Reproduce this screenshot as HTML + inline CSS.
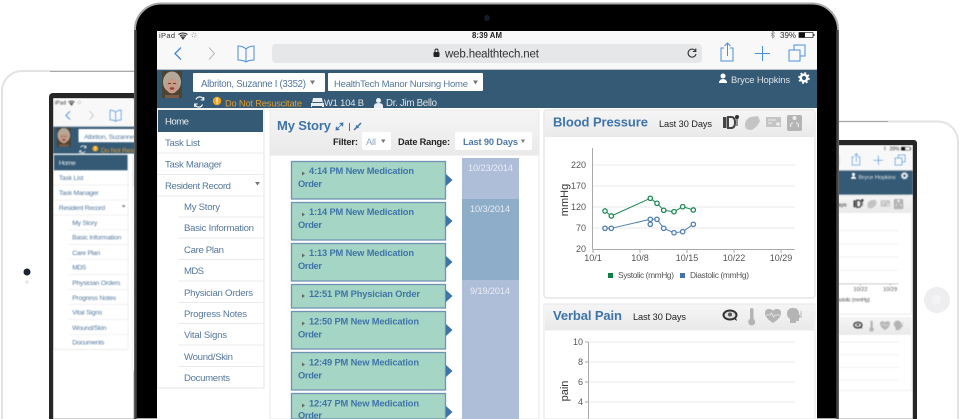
<!DOCTYPE html>
<html><head><meta charset="utf-8"><style>
html,body{margin:0;padding:0;background:#fff;width:960px;height:419px;overflow:hidden}
svg{display:block}
text{font-family:"Liberation Sans",sans-serif}
.m{font-size:9.6px;fill:#55789c}
.h{font-size:13px;font-weight:bold;fill:#3f74a8}
.c{font-size:9.3px;font-weight:bold;fill:#3f74a8}
.l{font-size:8.4px;fill:#555}
.card{fill:#a5d5c5;stroke:#6f93b3;stroke-width:1.3}
.arr{fill:#3f74a8}
.tri{fill:#666}
.g{stroke:#e8e8e8;stroke-width:1}
.ic{fill:none;stroke:#4a90d9;stroke-width:1}
</style></head><body>
<svg xmlns="http://www.w3.org/2000/svg" width="960" height="419" viewBox="0 0 960 419">
<defs>
<clipPath id="cm"><rect x="157" y="31" width="660" height="388"/></clipPath>
<linearGradient id="hd" x1="0" y1="0" x2="0" y2="1"><stop offset="0" stop-color="#f5f5f5"/><stop offset="1" stop-color="#e9e9e9"/></linearGradient>
<clipPath id="cl"><rect x="53" y="98" width="81" height="321"/></clipPath>
<clipPath id="cr"><rect x="838" y="145" width="75" height="274"/></clipPath>
<g id="screen">
<rect x="157" y="31" width="660" height="388" fill="#fff"/>
<rect x="157" y="31" width="660" height="38" fill="#f8f8f8"/>
<text x="159" y="38" font-size="7.500" fill="#333" textLength="16">iPad</text>
<path d="M178.500 34.500q4.500-3 9 0M180 36q3-2 6 0M183 39l-1.500-2h3z" fill="none" stroke="#333" stroke-width="1.100"/>
<circle cx="194" cy="35" r="2" fill="none" stroke="#999" stroke-dasharray="1 1"/>
<text x="472" y="38" font-size="7.800" font-weight="bold" fill="#222" textLength="30">8:39 AM</text>
<path d="M771 33l3.500 3-2 2v-7l2 2-3.500 3" fill="none" stroke="#888" stroke-width=".7"/>
<text x="780" y="38" font-size="8" fill="#333" textLength="16">39%</text>
<rect x="799" y="32.500" width="14" height="5" fill="#fff" stroke="#222" stroke-width=".7"/><rect x="799" y="32.500" width="6" height="5" fill="#111"/><rect x="813.500" y="34" width="1" height="2" fill="#222"/>
<path d="M181 47.500l-6 6 6 6" fill="none" stroke="#3d86d6" stroke-width="1.300"/>
<path d="M209 47.500l5.500 6-5.500 6" fill="none" stroke="#bbb" stroke-width="1.100"/>
<path d="M246 49q-3-3-8-3v14q5 0 8 2q3-2 8-2v-14q-5 0-8 3v13" class="ic"/>
<rect x="272" y="44" width="430" height="19" rx="4" fill="#e6e7e8"/>
<rect x="433.500" y="52" width="6" height="5" rx="1" fill="#222"/><path d="M435 52v-1.500a1.500 1.500 0 0 1 3 0v1.500" fill="none" stroke="#222"/>
<text x="445" y="57.500" font-size="11.500" fill="#333" textLength="94">web.healthtech.net</text>
<path d="M695.500 51a4 4 0 1 0 .5 3M695.800 48.500v3h-3" fill="none" stroke="#333" stroke-width="1.100"/>
<path d="M724 48h-3v13h12v-13h-3M727.500 56v-12.500M724.500 46l3-3 3 3" class="ic"/>
<path d="M755 53.500h15M762.500 46v15" class="ic"/>
<path d="M789 50h11v11h-11zM794 50v-5h11v11h-5" class="ic"/>
<rect x="157" y="69" width="660" height="1" fill="#bcc4cb"/>
<rect x="157" y="70" width="660" height="38" fill="#355a75"/>
<rect x="162" y="71" width="20" height="27" fill="#4e4232"/>
<ellipse cx="172" cy="82" rx="9" ry="10.500" fill="#b3a99b"/>
<ellipse cx="172" cy="86" rx="6" ry="7.500" fill="#c89a86"/>
<path d="M168 83.500h3M173 83.500h3" stroke="#5c4238" stroke-width=".9"/>
<ellipse cx="172" cy="88.500" rx="2.300" ry="1.400" fill="#8a4a42"/>
<rect x="165" y="95" width="14" height="3" fill="#7a5c46"/>
<rect x="193" y="73" width="132" height="19" rx="1" fill="#fff"/>
<text x="201" y="87" font-size="9.700" fill="#55789c" textLength="105">Albriton, Suzanne I (3352)</text>
<path d="M310 80.500h5l-2.500 4z" fill="#777"/>
<rect x="328" y="73" width="155" height="18" rx="1" fill="#fff"/>
<text x="334" y="87" font-size="9.500" fill="#55789c" textLength="134">HealthTech Manor Nursing Home</text>
<path d="M473 80.500h5l-2.500 4z" fill="#777"/>
<path d="M203.500 99.500a4 4 0 0 0-7.500 0M195 104.500a4 4 0 0 0 7.500 0M203.700 97v3h-3M194.700 107v-3h3" fill="none" stroke="#fff" stroke-width="1.100"/>
<circle cx="217" cy="101" r="4.200" fill="#f0a41f"/><rect x="216.400" y="98" width="1.300" height="3.700" fill="#fff"/><rect x="216.400" y="102.500" width="1.300" height="1.200" fill="#fff"/>
<text x="225" y="106.500" font-size="9.300" fill="#e69c2e" textLength="77">Do Not Resuscitate</text>
<path d="M313 98h9l1 5h1v4h-2v-1h-10v1h-1v-4h1z" fill="#e9eef2"/><rect x="312.500" y="102" width="10" height="1" fill="#355a75"/>
<text x="324" y="106" font-size="9.400" fill="#dde3e8" textLength="40">W1 104 B</text>
<circle cx="378.500" cy="100.500" r="2.500" fill="#e9eef2"/><path d="M374 108v-2q0-3 4.500-3t4.500 3v2z" fill="#e9eef2"/>
<text x="386" y="106" font-size="9.700" fill="#dde3e8" textLength="51">Dr. Jim Bello</text>
<circle cx="723" cy="76" r="2.500" fill="#fff"/><path d="M719 83v-1q1-3 4-3t4 3v1z" fill="#fff"/>
<text x="731" y="83" font-size="9.400" fill="#dde3e8" textLength="59">Bryce Hopkins</text>
<circle cx="804" cy="78" r="3.300" fill="none" stroke="#fff" stroke-width="2.400"/><circle cx="804" cy="78" r="5" fill="none" stroke="#fff" stroke-width="1.600" stroke-dasharray="2 1.930"/>

<rect x="157" y="109" width="107" height="279" fill="#fff" stroke="#e6e6e6"/>
<rect x="158" y="110" width="105" height="22" fill="#355a75"/>
<text x="165" y="124.500" font-size="9.600" fill="#e6ebef" textLength="24">Home</text>
<g class="m">
<text x="165" y="146" textLength="35">Task List</text>
<text x="165" y="167.500" textLength="57">Task Manager</text>
<text x="165" y="189" textLength="66">Resident Record</text>
<text x="184" y="210" textLength="36">My Story</text>
<text x="184" y="231" textLength="70">Basic Information</text>
<text x="184" y="253" textLength="40">Care Plan</text>
<text x="184" y="274" textLength="20">MDS</text>
<text x="184" y="296" textLength="69">Physician Orders</text>
<text x="184" y="317" textLength="63">Progress Notes</text>
<text x="184" y="338" textLength="43">Vital Signs</text>
<text x="184" y="360" textLength="49">Wound/Skin</text>
<text x="184" y="381" textLength="46">Documents</text>
</g>
<path d="M255 182h5l-2.500 3.500z" fill="#777"/>
<path d="M157 153h107M157 174.500h107M157 196h107M178 217h86M178 238h86M178 259.500h86M178 281h86M178 302.500h86M178 323.500h86M178 345h86M178 366.500h86" stroke="#ebebeb" fill="none"/>

<rect x="270" y="110" width="269" height="309" fill="#fff" stroke="#e9e9e9"/>
<rect x="270.500" y="110.500" width="268" height="45" fill="url(#hd)"/>
<text x="277" y="130" class="h" textLength="54">My Story</text>
<path d="M337 129l4-4M343 123l-3 .3 2.700 2.700zM336 130l3-.3-2.700-2.700z" fill="#3f74a8" stroke="#3f74a8" stroke-width=".8"/>
<rect x="349" y="123" width="1" height="8" fill="#3f74a8"/>
<path d="M354 130l7-7M356 125.500l2.500 2.500" fill="none" stroke="#3f74a8" stroke-width="1.500"/>
<text x="333" y="145" font-size="9.400" font-weight="bold" fill="#222" textLength="25">Filter:</text>
<rect x="362" y="132" width="29" height="18" rx="2" fill="#fff"/>
<text x="366" y="145" font-size="9.500" fill="#8aa6c4" textLength="10">All</text>
<path d="M381 139.500h4.500l-2.200 3.500z" fill="#777"/>
<text x="398" y="145" font-size="9.200" font-weight="bold" fill="#222" textLength="52">Date Range:</text>
<rect x="455" y="132" width="77" height="18" rx="2" fill="#fff"/>
<text x="463" y="145" font-size="9.300" font-weight="bold" fill="#4f7aa8" textLength="55">Last 90 Days</text>
<path d="M521 139.500h4l-2 3.500z" fill="#777"/>

<rect x="462" y="158" width="57" height="41" fill="#aebdd8"/>
<rect x="462" y="199" width="57" height="81" fill="#8eadc8"/>
<rect x="462" y="280" width="57" height="139" fill="#aebdd8"/>
<text x="468" y="171" font-size="9.200" fill="#e8edf4" textLength="45">10/23/2014</text>
<text x="470" y="212" font-size="9.200" fill="#e8edf4" textLength="40">10/3/2014</text>
<text x="470" y="294" font-size="9.200" fill="#e8edf4" textLength="40">9/19/2014</text>

<rect x="291.500" y="161.500" width="154" height="37.500" class="card"/><path class="arr" d="M446 174l6.500 6-6.500 6z"/><path class="tri" d="M302 171.500l3 2-3 2z"/>
<text x="309" y="174" class="c" textLength="105">4:14 PM New Medication</text><text x="298" y="187" class="c" textLength="24">Order</text>
<rect x="291.500" y="202.500" width="154" height="37.500" class="card"/><path class="arr" d="M446 215l6.500 6-6.500 6z"/><path class="tri" d="M302 212.500l3 2-3 2z"/>
<text x="309" y="215" class="c" textLength="105">1:14 PM New Medication</text><text x="298" y="228" class="c" textLength="24">Order</text>
<rect x="291.500" y="243.500" width="154" height="37.500" class="card"/><path class="arr" d="M446 256l6.500 6-6.500 6z"/><path class="tri" d="M302 253.500l3 2-3 2z"/>
<text x="309" y="256" class="c" textLength="105">1:13 PM New Medication</text><text x="298" y="269" class="c" textLength="24">Order</text>
<rect x="291.500" y="284.500" width="154" height="23.500" class="card"/><path class="arr" d="M446 290l6.500 6-6.500 6z"/><path class="tri" d="M302 294l3 2-3 2z"/>
<text x="309" y="297" class="c" textLength="111">12:51 PM Physician Order</text>
<rect x="291.500" y="311.500" width="154" height="37.500" class="card"/><path class="arr" d="M446 324l6.500 6-6.500 6z"/><path class="tri" d="M302 321.500l3 2-3 2z"/>
<text x="309" y="324.500" class="c" textLength="110">12:50 PM New Medication</text><text x="298" y="337.500" class="c" textLength="24">Order</text>
<rect x="291.500" y="352.500" width="154" height="37.500" class="card"/><path class="arr" d="M446 365l6.500 6-6.500 6z"/><path class="tri" d="M302 362.500l3 2-3 2z"/>
<text x="309" y="365.500" class="c" textLength="110">12:49 PM New Medication</text><text x="298" y="378.500" class="c" textLength="24">Order</text>
<rect x="291.500" y="393.500" width="154" height="25.500" class="card"/><path class="arr" d="M446 406l6.500 6-6.500 6z"/><path class="tri" d="M302 403.500l3 2-3 2z"/>
<text x="309" y="406.500" class="c" textLength="110">12:47 PM New Medication</text><text x="298" y="418.500" class="c" textLength="24">Order</text>

<rect x="544" y="110" width="271" height="188" rx="3" fill="#fff" stroke="#e6e6e6" stroke-width="1.500"/>
<rect x="545" y="111" width="269" height="26" fill="url(#hd)"/>
<text x="553" y="126.500" class="h" textLength="95">Blood Pressure</text>
<text x="659" y="127" font-size="9.200" fill="#222" textLength="53">Last 30 Days</text>
<rect x="723" y="117" width="3.500" height="11" fill="#444"/><path d="M728 117h3q4 0 4 5.500t-4 5.500h-3z" fill="none" stroke="#444" stroke-width="2"/><circle cx="737" cy="117" r="2" fill="#333"/><path d="M737 118v8" stroke="#333"/>
<path d="M745 125q0-6 6-8l7-1 2 5q-3 7-9 9-6 0-6-5z" fill="#c4c4c4"/>
<rect x="766" y="117" width="15" height="10" fill="#c4c4c4"/><path d="M768 120h8M768 123h4" stroke="#eee"/><circle cx="778" cy="124" r="1.800" fill="#eee"/>
<rect x="787" y="115" width="15" height="16" rx="2" fill="#b4b4b4"/><circle cx="794.500" cy="118" r="2" fill="#eee"/><path d="M791 127a2.500 2.500 0 0 1 2-4M798 127a2.500 2.500 0 0 0-2-4" fill="none" stroke="#eee"/>

<path d="M593 165h202M593 186h202M593 207h202M593 228h202" class="g"/>
<path d="M592.500 148v101.500M592.500 249.500h202" stroke="#aaa" fill="none"/>
<path d="M593 250v3M640 250v3M687 250v3M734 250v3M781 250v3" stroke="#aaa"/>
<g class="l" text-anchor="end" style="font-size:9px">
<text x="586" y="168">220</text><text x="586" y="189">170</text><text x="586" y="210">120</text><text x="586" y="231">70</text><text x="586" y="252">20</text>
</g>
<g class="l" text-anchor="middle" style="font-size:9px">
<text x="593" y="261">10/1</text><text x="640" y="261">10/8</text><text x="687" y="261">10/15</text><text x="734" y="261">10/22</text><text x="781" y="261">10/29</text>
</g>
<text x="568" y="200" font-size="11" fill="#333" text-anchor="middle" transform="rotate(-90 568 200)">mmHg</text>
<path d="M605 211L611.300 216 650.300 198.300 657 203.300 663.700 210.300 674 211.700 682.700 206.700 693.300 210" fill="none" stroke="#1e8a55"/>
<path d="M605 228.300L611.300 228.300 650.300 219.300 657 219.300 663.700 228.300 674 232.700 682.700 231.700 693.300 224.300M650.300 219.300V224.300" fill="none" stroke="#4f7fb0"/>
<g fill="#fff" stroke="#1e8a55" stroke-width="1.300"><circle cx="605" cy="211" r="2.200"/><circle cx="611.300" cy="216" r="2.200"/><circle cx="650.300" cy="198.300" r="2.200"/><circle cx="657" cy="203.300" r="2.200"/><circle cx="663.700" cy="210.300" r="2.200"/><circle cx="674" cy="211.700" r="2.200"/><circle cx="682.700" cy="206.700" r="2.200"/><circle cx="693.300" cy="210" r="2.200"/></g>
<g fill="#fff" stroke="#4f7fb0" stroke-width="1.300"><circle cx="605" cy="228.300" r="2.200"/><circle cx="611.300" cy="228.300" r="2.200"/><circle cx="650.300" cy="219.300" r="2.200"/><circle cx="650.300" cy="224.300" r="2.200"/><circle cx="657" cy="219.300" r="2.200"/><circle cx="663.700" cy="228.300" r="2.200"/><circle cx="674" cy="232.700" r="2.200"/><circle cx="682.700" cy="231.700" r="2.200"/><circle cx="693.300" cy="224.300" r="2.200"/></g>
<rect x="608" y="273" width="5" height="5" fill="#0f8044"/>
<text x="618" y="278" class="l" textLength="56">Systolic (mmHg)</text>
<rect x="680" y="273" width="5" height="5" fill="#3f74a8"/>
<text x="690" y="278" class="l" textLength="59">Diastolic (mmHg)</text>

<rect x="544" y="304" width="271" height="115" fill="#fff" stroke="#e6e6e6"/>
<rect x="545" y="304.500" width="269" height="26" fill="url(#hd)"/>
<text x="553" y="320" class="h" textLength="69">Verbal Pain</text>
<text x="633" y="320" font-size="9.200" fill="#222" textLength="53">Last 30 Days</text>
<ellipse cx="730" cy="315" rx="6.500" ry="4.500" fill="#ddd" stroke="#333" stroke-width="2"/><circle cx="730" cy="314.500" r="2" fill="#555"/><path d="M734 319l3 2-1-3z" fill="#333"/>
<rect x="750" y="308" width="3.500" height="13" rx="1.700" fill="#b4b4b4"/><circle cx="751.700" cy="322" r="3.500" fill="#b4b4b4"/>
<path d="M773 323q-8-5-8-10 0-4 4-4 3 0 4 2 1-2 4-2 4 0 4 4 0 5-8 10z" fill="#b4b4b4"/><path d="M766 315h4l1.500-2 2 4 1.500-2h5" fill="none" stroke="#eee" stroke-width=".8"/>
<path d="M787 314q0-6 6-6t6 6l2 3-2 1v3h-3v2h-6v-4q-3-2-3-5z" fill="#b4b4b4"/><path d="M801 311v7" stroke="#ccc" stroke-width="1.500"/>
<path d="M588 342h207M588 362h207M588 382h207M588 402h207" class="g"/>
<path d="M588.500 342v77" stroke="#aaa"/><path d="M585 342h3M585 362h3M585 382h3M585 402h3" stroke="#aaa"/>
<g class="l" text-anchor="end" style="font-size:9px"><text x="583" y="345">10</text><text x="583" y="365">8</text><text x="583" y="385">6</text><text x="583" y="405">4</text></g>
<text x="568" y="391" font-size="11" fill="#333" text-anchor="middle" transform="rotate(-90 568 391)">pain</text>
</g>
</defs>

<!-- left iPad -->
<path d="M2 419V91a20 20 0 0 1 20-20H140" fill="#fff" stroke="#e2e2e2" stroke-width="2"/>
<path d="M50 71.500h90" stroke="#aaa" stroke-width="1"/>
<circle cx="27" cy="272" r="3.500" fill="#1c2233"/>
<circle cx="27" cy="282" r="1.800" fill="#e6e6e6"/>
<path d="M49 419V97a4 4 0 0 1 4-4H140V419z" fill="#262626"/>
<g clip-path="url(#cl)"><g style="filter:blur(.45px)"><rect x="53" y="98" width="81" height="321" fill="#fff"/><use href="#screen" transform="translate(-56.600 77.900) scale(.7)"/></g></g>

<!-- right iPad -->
<path d="M830 121.500H938a20 20 0 0 1 20 20V419" fill="#fff" stroke="#e2e2e2" stroke-width="2"/>
<path d="M838 121.500h50" stroke="#aaa" stroke-width="1"/>
<circle cx="937" cy="300" r="13" fill="#eeeef0"/><rect x="932.500" y="295.500" width="8" height="8" rx="2" fill="#f4f4f5"/>
<path d="M830 140H914a3 3 0 0 1 3 3V419H830z" fill="#262626"/>
<g clip-path="url(#cr)"><g style="filter:blur(.45px)"><rect x="838" y="145" width="75" height="274" fill="#fff"/><use href="#screen" transform="translate(398 126.600) scale(.63)"/></g></g>

<!-- main iPad -->
<path d="M135 419V29.500a26 26 0 0 1 26-26H812a26 26 0 0 1 26 26V419z" fill="#000" stroke="#a9a9a9" stroke-width="2"/>
<path d="M135.500 30V419M837.500 30V419" stroke="#444" stroke-width="2.500"/>
<circle cx="487" cy="18" r="3" fill="#141c24"/>
<g clip-path="url(#cm)"><g style="filter:blur(.3px)"><use href="#screen"/></g></g>
</svg>
</body></html>
